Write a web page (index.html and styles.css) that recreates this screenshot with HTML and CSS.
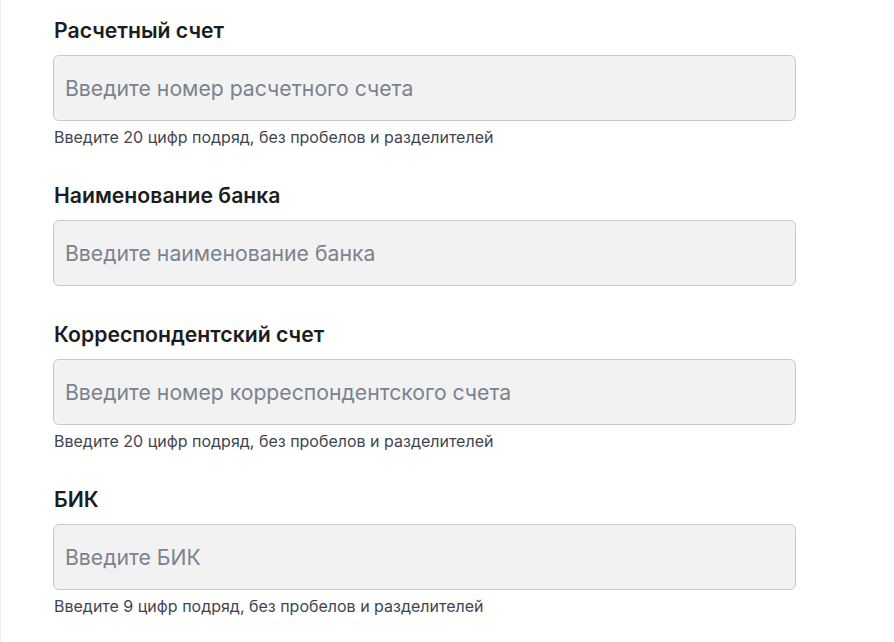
FILE: index.html
```html
<!DOCTYPE html>
<html lang="ru">
<head>
<meta charset="utf-8">
<title>Банковские реквизиты</title>
<link rel="stylesheet" href="styles.css">
</head>
<body>
<div class="page">
  <form class="form">
    <div class="field">
      <label class="label" for="acc">Расчетный счет</label>
      <input class="input" id="acc" type="text" placeholder="Введите номер расчетного счета">
      <div class="hint">Введите 20 цифр подряд, без пробелов и разделителей</div>
    </div>
    <div class="field">
      <label class="label" for="bank">Наименование банка</label>
      <input class="input" id="bank" type="text" placeholder="Введите наименование банка">
    </div>
    <div class="field">
      <label class="label" for="corr">Корреспондентский счет</label>
      <input class="input" id="corr" type="text" placeholder="Введите номер корреспондентского счета">
      <div class="hint">Введите 20 цифр подряд, без пробелов и разделителей</div>
    </div>
    <div class="field">
      <label class="label" for="bik">БИК</label>
      <input class="input" id="bik" type="text" placeholder="Введите БИК">
      <div class="hint">Введите 9 цифр подряд, без пробелов и разделителей</div>
    </div>
  </form>
</div>
</body>
</html>
```

FILE: styles.css
```css
html, body {
  margin: 0;
  padding: 0;
  background: #ffffff;
}
body {
  font-family: Inter, "Noto Sans", "Liberation Sans", sans-serif;
  color: #1c1d21;
}
.page {
  min-height: 642px;
  box-sizing: border-box;
  border-left: 1px solid #ededed;
  padding: 18px 98px 0 52px;
}
.form {
  display: flex;
  flex-direction: column;
  gap: 36px;
}
.field {
  display: flex;
  flex-direction: column;
}
.label {
  font-size: 21.2px;
  line-height: 24px;
  font-weight: 600;
  color: #1c1d21;
  margin-bottom: 13px;
  margin-left: 1px;
}
.input {
  box-sizing: border-box;
  height: 66px;
  width: 100%;
  margin: 0;
  padding: 0 11px;
  border: 1px solid #c5c8cf;
  border-radius: 6px;
  background: #f2f2f3;
  font-family: inherit;
  font-size: 21.2px;
  color: #1c1d21;
  outline: none;
}
.input::placeholder {
  color: #7b838f;
  opacity: 1;
}
.hint {
  margin-top: 6px;
  margin-left: 1px;
  font-size: 16px;
  line-height: 20px;
  color: #3f4550;
}
```
